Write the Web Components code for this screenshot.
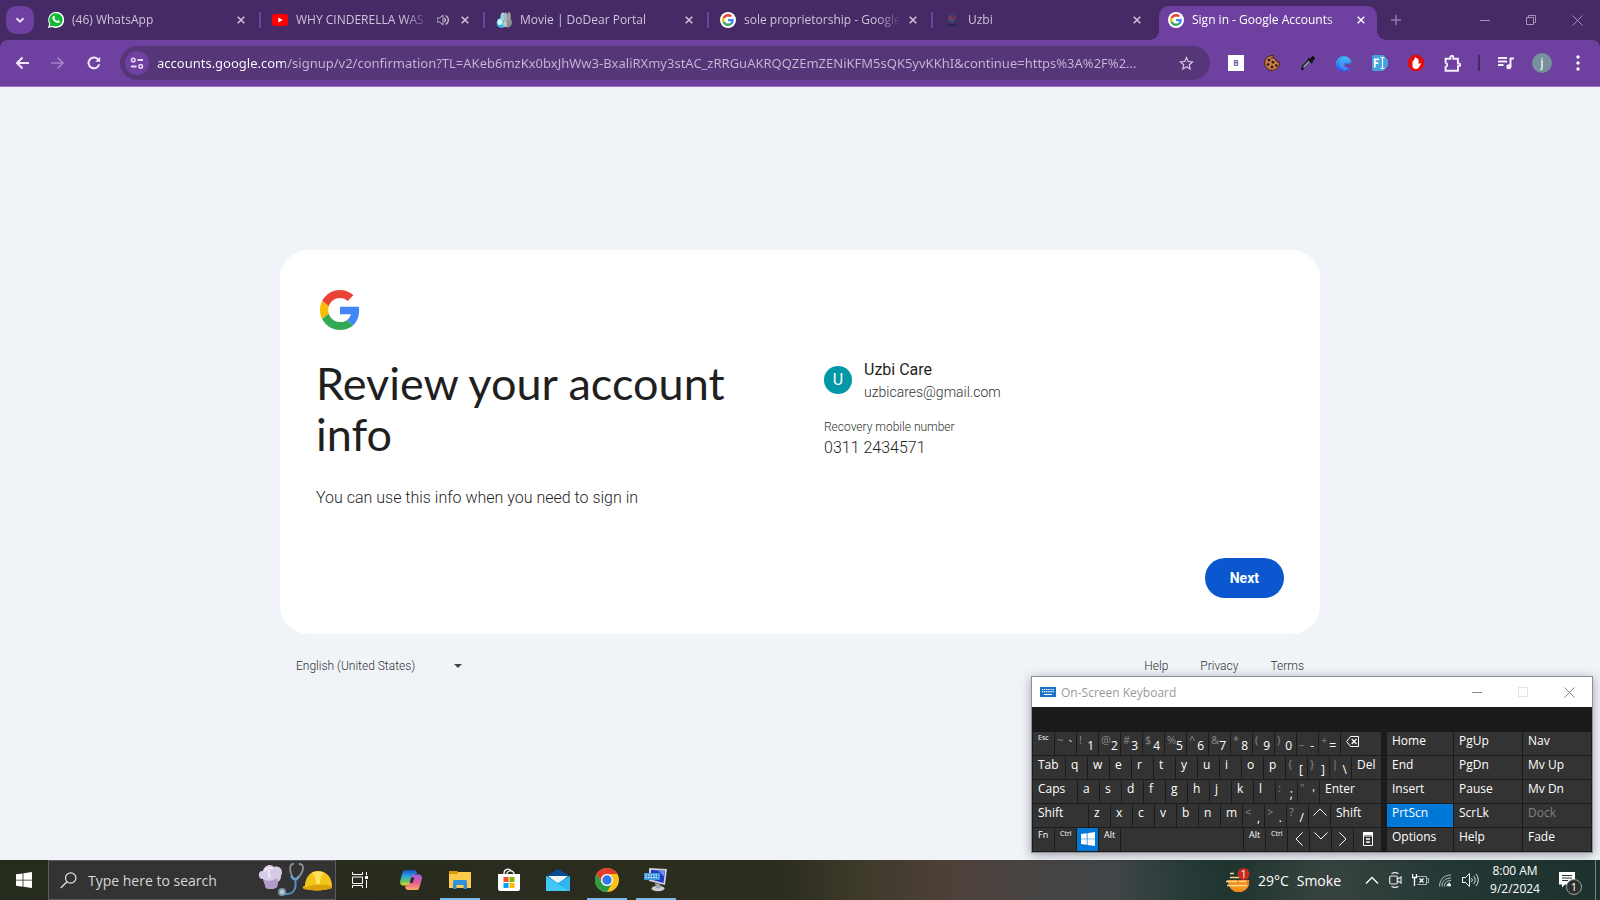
<!DOCTYPE html>
<html lang="en">
<head>
<meta charset="utf-8">
<title>Sign in - Google Accounts</title>
<style>
  html, body {
    margin: 0;
    height: 100%;
  }
  body {
    display: flex;
    flex-direction: column;
    min-height: 100vh;
    background-color: #f0f4f9;
    overflow: hidden;
    --ui-font: "Open Sans", "Noto Sans", sans-serif;
    --google-font: Roboto, "Liberation Sans", sans-serif;
    font-family: var(--ui-font);
  }
  account-page {
    flex: 1;
  }
  screen-keyboard {
    position: absolute;
    right: 7px;
    bottom: 47px;
  }
</style>
</head>
<body>
  <tab-strip>
    <browser-tab><ui-icon slot="icon" name="whatsapp"></ui-icon>(46) WhatsApp</browser-tab>
    <browser-tab sound><ui-icon slot="icon" name="youtube"></ui-icon>WHY CINDERELLA WAS A</browser-tab>
    <browser-tab><ui-icon slot="icon" name="movie"></ui-icon>Movie | DoDear Portal</browser-tab>
    <browser-tab><ui-icon slot="icon" name="gfav"></ui-icon>sole proprietorship - Google</browser-tab>
    <browser-tab class="last"><ui-icon slot="icon" name="uzbi"></ui-icon>Uzbi</browser-tab>
    <browser-tab active><ui-icon slot="icon" name="gfav"></ui-icon>Sign in - Google Accounts</browser-tab>
  </tab-strip>
  <tool-bar></tool-bar>
  <account-page>
    <account-card>
      <span slot="title">Review your account info</span>
      <span slot="subtitle">You can use this info when you need to sign in</span>
      <span slot="name">Uzbi Care</span>
      <span slot="email">uzbicares@gmail.com</span>
      <span slot="phone">0311 2434571</span>
    </account-card>
    <account-footer></account-footer>
  </account-page>
  <screen-keyboard></screen-keyboard>
  <task-bar></task-bar>

<script>
const G_PATHS = `
  <path fill="#EA4335" d="M24 9.5c3.54 0 6.71 1.22 9.21 3.6l6.85-6.85C35.9 2.38 30.47 0 24 0 14.62 0 6.51 5.38 2.56 13.22l7.98 6.19C12.43 13.72 17.74 9.5 24 9.5z"/>
  <path fill="#4285F4" d="M46.98 24.55c0-1.57-.15-3.09-.38-4.55H24v9.02h12.94c-.58 2.96-2.26 5.48-4.78 7.18l7.73 6c4.51-4.18 7.09-10.36 7.09-17.65z"/>
  <path fill="#FBBC05" d="M10.53 28.59c-.48-1.45-.76-2.99-.76-4.59s.27-3.14.76-4.59l-7.98-6.19C.92 16.46 0 20.12 0 24c0 3.88.92 7.54 2.56 10.78l7.97-6.19z"/>
  <path fill="#34A853" d="M24 48c6.48 0 11.93-2.13 15.89-5.81l-7.73-6c-2.15 1.45-4.92 2.3-8.16 2.3-6.26 0-11.57-4.22-13.47-9.91l-7.98 6.19C6.51 42.62 14.62 48 24 48z"/>`;
const WIN_PATHS = `<path fill="#fff" d="M0 2.3 6.6 1.4v6.3H0zM7.4 1.3 16 0v7.7H7.4zM0 8.4h6.6v6.3L0 13.8zM7.4 8.4H16V16l-8.6-1.2z"/>`;
const line = (d, w = 1, c = '#fff') => `<path d="${d}" fill="none" stroke="${c}" stroke-width="${w}"/>`;

// name: [width, height, viewBox, markup]
const ICONS = {
  google: [40, 40, '0 0 48 48', G_PATHS],
  gfav: [16, 16, '0 0 16 16', `<circle cx="8" cy="8" r="8" fill="#fff"/><svg x="2" y="2" width="12" height="12" viewBox="0 0 48 48">${G_PATHS}</svg>`],
  whatsapp: [16, 16, '0 0 16 16', `<path d="M0 16 1.2 11.8A8 8 0 1 1 4.3 14.9z" fill="#fff"/><path d="M1.6 14.5 2.4 11.7A6.7 6.7 0 1 1 4.6 13.7z" fill="#12b834"/><path d="M5.4 3.9c.4-.3.9-.2 1.1.2l.6 1.4-.7 1c.6 1.2 1.5 2 2.7 2.6l.9-1 1.6.8c.3.2.3.6.1 1-.4.9-1.3 1.3-2.2 1.2C6.8 10.7 4.6 8.4 4.3 6.1c-.1-.9.4-1.7 1.1-2.2z" fill="#fff"/>`],
  youtube: [16, 16, '0 0 16 16', '<rect y="2" width="16" height="12" rx="3" fill="#f00"/><path d="M6.3 5.500v5L10.7 8z" fill="#fff"/>'],
  movie: [16, 16, '0 0 16 16', '<ellipse cx="5.5" cy="11" rx="5" ry="5" fill="#38b7e6"/><ellipse cx="4" cy="10" rx="2.5" ry="3" fill="#d8f5fc"/><ellipse cx="7" cy="5" rx="2.5" ry="4.5" fill="#8fdcf2"/><ellipse cx="11.5" cy="10.5" rx="4.5" ry="5" fill="#8b8f92"/><ellipse cx="9.5" cy="5" rx="2" ry="4.5" fill="#aeb3b5"/><ellipse cx="13" cy="4.5" rx="1.7" ry="4.5" fill="#9da1a4"/><ellipse cx="9" cy="12" rx="2" ry="3" fill="#c3cacd"/>'],
  uzbi: [16, 16, '0 0 16 16', '<circle cx="8" cy="6" r="4.5" fill="#3d3a66"/><path d="M4 5l3-2 1 3 3-2 1 3-3 1-1 2-3-1z" fill="#7d3556"/><path d="M5 8l3-1 2 2-2 2z" fill="#28606f"/><path d="M3 12h10v2H3z" fill="#2e2450"/>'],
  down: [10, 10, '0 0 10 10', line('M1.5 3.2 5 6.7 8.5 3.2', 2, '#e8dcf5')],
  close: [8, 8, '0 0 8 8', line('M.7.7l6.6 6.6M7.3.7.7 7.3', 1.5, 'currentColor')],
  speaker: [12, 12, '0 0 12 12', '<path d="M0 4h2.500L6 1.2v9.6L2.5 8H0z" fill="none" stroke="#c5b9d3"/>' + line('M7.5 4a3 3 0 0 1 0 4M8.5 1.5a5 5 0 0 1 0 9', 1.3, '#c5b9d3')],
  plus: [10, 10, '0 0 10 10', line('M5 0v10M0 5h10', 1.5, '#8f7ca6')],
  min: [10, 10, '0 0 10 10', line('M0 5.5h10', 1, 'currentColor')],
  restore: [10, 10, '0 0 10 10', line('M.5 2.5h7v7h-7zM2.5 2.5v-2h7v7h-2', 1, 'currentColor')],
  max: [10, 10, '0 0 10 10', line('M.5.5h9v9h-9z', 1, 'currentColor')],
  x: [11, 11, '0 0 11 11', line('M.5.5l10 10M10.5.5l-10 10', 1, 'currentColor')],
  back: [14, 14, '0 0 14 14', line('M14 7H2M7.5 1.5 2 7l5.5 5.5', 2, '#f0e8f8')],
  forward: [14, 14, '0 0 14 14', line('M0 7h12M6.5 1.5 12 7l-5.5 5.5', 1.7, '#a283c6')],
  reload: [14, 14, '0 0 14 14', line('M12.2 8.3A5.4 5.4 0 1 1 11 3.3l1.5 1.6', 2, '#f0e8f8') + '<path d="M13.2.8v5H8.3z" fill="#f0e8f8"/>'],
  tune: [14, 12, '0 0 14 12', line('M7.5 3H13M1 9.5h5.5', 2, '#e6d9f4') + '<circle cx="3.3" cy="3" r="1.8" fill="none" stroke="#e6d9f4" stroke-width="1.5"/><circle cx="10.7" cy="9.3" r="1.8" fill="none" stroke="#e6d9f4" stroke-width="1.5"/>'],
  star: [15, 15, '0 0 24 24', '<path fill="#d3c6e2" d="M24 8.63l-8.63-.74L12 0 8.63 7.9 0 8.63l6.55 5.68L4.59 22.8 12 18.3l7.41 4.5-1.96-8.49L24 8.63zM12 15.9l-4.52 2.73 1.2-5.13-4-3.45 5.25-.45L12 4.8l2.07 4.8 5.25.45-4 3.45 1.2 5.13L12 15.9z"/>'],
  extb: [16, 16, '0 0 16 16', '<rect width="16" height="16" fill="#fff"/><text x="8" y="11" font-size="8" font-weight="700" font-family="Open Sans" text-anchor="middle" fill="#6a5fb0">B</text>'],
  cookie: [16, 16, '0 0 16 16', '<path d="M9 .5a3 3 0 0 0 2.5 3.500A3 3 0 0 0 15.5 7 7.5 7.5 0 1 1 9 .5z" fill="#c47a45" stroke="#4a2412"/><g fill="#2c140c"><circle cx="5" cy="5" r="1.3"/><circle cx="9" cy="7.3" r="1.3"/><circle cx="4" cy="9.5" r="1.3"/><circle cx="8" cy="12" r="1.3"/><circle cx="12.3" cy="10.5" r="1.3"/><circle cx="8" cy="3" r=".8"/></g>'],
  dropper: [16, 16, '0 0 16 16', line('M2 15 3 11.5 9.5 5', 2.4, '#161616') + line('M3.5 12 9.5 6', 1.2, '#7fc98a') + line('M8 3.500l4.5 4.5', 2, '#111') + line('M11 5.2 14 2', 3.6, '#111')],
  edge: [16, 16, '0 0 16 16', '<defs><linearGradient id="e" x1="0" x2="0" y1="0" y2="1"><stop offset="0" stop-color="#35b5ef"/><stop offset="1" stop-color="#2950ee"/></linearGradient></defs><path d="M15.7 7A8 8 0 1 0 14.8 13.2C11 14 8.5 12 9 8.5 10.5 9.5 13.5 9.3 15.7 7z" fill="url(#e)"/>' + line('M14 5.5C10 1 3 4.5 4.5 10.5c.7 2.5 2.5 4 5 4.5M13 7C9.5 4 6 7 7 10.5c.6 2 2.5 3 5 3', 0.6, '#8ad2f8')],
  fi: [16, 16, '0 0 16 16', '<path d="M0 2a2 2 0 0 1 2-2h9l5 5v6l-5 5H2a2 2 0 0 1-2-2z" fill="#45a3e0"/>' + line('M2.8 12.5V4.3h4.4M2.8 8.2h3.6', 1.8) + line('M8.5 2.5h4M8.5 13.5h4M10.5 2.5v11', 1.2)],
  hand: [16, 16, '0 0 16 16', '<path d="M4.7 0h6.6L16 4.7v6.6L11.3 16H4.7L0 11.3V4.7z" fill="#e40d0d"/><path d="M4.5 6v5c0 2 1.5 3 3.3 3 2 0 3-1.2 3.8-2.7l1.4-2.9-1-.5-1.4 1.5V4.5H9.5V3H8v-.7H6.9V4H5.8v2z" fill="#fff"/>'],
  puzzle: [17, 17, '0 0 16 16', line('M1.5 3.5h4.500V2.2a1.4 1.4 0 0 1 2.8 0v1.3h4.3V8h.8a1.3 1.3 0 0 1 0 2.6h-.8v4.2H1.5v-3.5a2.2 2.2 0 0 0 0-4.2z', 1.8, '#f4eefb')],
  music: [16, 14, '0 0 16 14', line('M0 2h9M0 5.5h9M0 9h5.5M12.5 11V2.5H16', 2, '#f4eefb') + '<circle cx="10.8" cy="10.8" r="2.5" fill="#f4eefb"/>'],
  dots: [4, 16, '0 0 4 16', '<circle cx="2" cy="2" r="1.7" fill="#fff"/><circle cx="2" cy="8" r="1.7" fill="#fff"/><circle cx="2" cy="14" r="1.7" fill="#fff"/>'],
  caret: [8, 4, '0 0 8 4', '<path d="M0 0h8L4 4z" fill="#444746"/>'],
  kbd: [16, 10, '0 0 16 10', '<rect width="16" height="10" fill="#1f74c9"/><path d="M2 2.5h12M2 4.7h12" stroke="#fff" stroke-width="1.2" stroke-dasharray="1.3 .8"/><path d="M4 7.5h8" stroke="#fff"/>'],
  win: [16, 16, '0 0 16 16', WIN_PATHS],
  winkey: [14, 14, '0 0 16 16', WIN_PATHS],
  bksp: [13, 11, '0 0 13 11', line('M.7 5.5 4.5.5h8v10h-8z', 1) + line('M5.7 3l4.8 5M10.5 3 5.7 8', 1.2)],
  up: [14, 8, '0 0 14 8', line('M.5 7.5 7 1l6.5 6.5', 1)],
  dn: [14, 8, '0 0 14 8', line('M.5.5 7 7 13.5.5', 1)],
  left: [8, 14, '0 0 8 14', line('M7.5.5 1 7l6.5 6.5', 1)],
  right: [8, 14, '0 0 8 14', line('M.5.5 7 7 .5 13.5', 1)],
  menu: [10, 14, '0 0 10 14', line('M.5 1.5h9M.5 4h9M.5 1v12.5h9V1', 1) + '<path d="M0 0h10v3H0z" fill="#fff"/>' + line('M3 7h4M3 10h4', 1.3)],
  search: [17, 17, '0 0 17 17', '<circle cx="10.7" cy="6" r="5.2" fill="none" stroke="#e6e6e6" stroke-width="1.2"/>' + line('M7 9.8.7 16', 1.3, '#e6e6e6')],
  gear: [76, 36, '0 0 76 36', `<g><path d="M6 17C1 18 0 8 6 9c1-6 8-8 11-4 6-2 10 4 7 9 0 4-2 5-3 6l-1 5c-4 3-9 2-11 1z" fill="#d8cbe8"/><path d="M6 17c5 3 10 2 14-1l1 4-1 5c-4 3-9 2-11 1z" fill="#b29bca"/><path d="M7 9c3-3 6-4 9-2M12 8c-1 4 0 6 1 8" fill="none" stroke="#f7f1fc" stroke-width="1.5"/></g>
    ${line('M37 2c-5-1-5 8-1 14 2 3 4 2 6-1 5-7 6-13 0-13', 1.8, '#8b9298')}${line('M38 17c2 9-1 15-8 15-2 0-5-1-5-3', 2, '#4b8fc4')}${line('M34 14c2 4 5 4 8 0', 2, '#5ba4d6')}<circle cx="25" cy="30" r="4" fill="#7d94a6"/><circle cx="25" cy="30" r="2.2" fill="#b8cad6"/>
    <path d="M48 24c0-7 4-15 13-15s14 7 14 15v2c-8 3-19 3-28 1-2-2-1-3 1-3z" fill="#f4c519"/><path d="M55 11c3-2 9-2 12 0-3 2-4 6-4 11h-4c0-5-1-9-4-11z" fill="#ffe060"/><path d="M46 26c10-4 18-4 29-2v2c-8 3-19 3-28 1z" fill="#d9a20d"/>`],
  taskview: [16, 16, '0 0 16 16', line('M.5 0v2.5h10V0M.5 16v-2.5h10V16M.5 5h10v6.5H.5zM14.5 0v3M14.5 8v8', 1) + '<path d="M13 4h3v3h-3z" fill="#fff"/>'],
  copilot: [22, 22, '0 0 22 22', `<defs><linearGradient id="a" x1="0" y1="0" x2="0" y2="1"><stop offset="0" stop-color="#1b4fc4"/><stop offset=".4" stop-color="#2aa5dd"/><stop offset=".75" stop-color="#6fc65b"/><stop offset="1" stop-color="#f3d332"/></linearGradient><linearGradient id="b" x1="0" y1="0" x2="0" y2="1"><stop offset="0" stop-color="#9b62e8"/><stop offset=".5" stop-color="#e65a9c"/><stop offset="1" stop-color="#ffa95e"/></linearGradient></defs>
    <path d="M5 1h9c2 0 2.5 1.5 3 4-3 0-4 1-4.8 4L11 14c-.6 2-1.5 2.5-3 2.5H3C.5 16.5-.3 14 .3 11.5l2-7C3 2 3.5 1 5 1z" fill="url(#a)"/><path d="M17 21H8c-2 0-2.5-1.5-3-4 3 0 4-1 4.8-4L11 8c.6-2 1.5-2.5 3-2.5h5c2.5 0 3.3 2.5 2.7 5l-2 7C19 20 18.5 21 17 21z" fill="url(#b)"/><path d="M11 8.5h3.5L12.5 14H10z" fill="#292b1e"/>`],
  folder: [22, 20, '0 0 22 20', '<path d="M0 1h8l2 2H0z" fill="#d58b00"/><path d="M0 2h22v16H0z" fill="#fccb4c"/><path d="M0 1h8l1.5 2L8 4H0z" fill="#e09b08"/><path d="M4 11.5a1.5 1.5 0 0 1 1.5-1.5h11a1.5 1.5 0 0 1 1.5 1.5V19h-3.5v-4h-7v4H4z" fill="#3390db"/>'],
  store: [24, 24, '0 0 24 24', line('M7 7V5a4 4 0 0 1 7-2.5M10 7V5a4 4 0 0 1 7 0v2', 1.3) + '<path d="M1 6h22v15a2 2 0 0 1-2 2H3a2 2 0 0 1-2-2z" fill="#fff"/><path d="M6.5 9h5v5h-5z" fill="#f25022"/><path d="M12.5 9h5v5h-5z" fill="#7fba00"/><path d="M6.5 15h5v5h-5z" fill="#00a4ef"/><path d="M12.5 15h5v5h-5z" fill="#ffb900"/>'],
  mail: [24, 24, '0 0 24 24', '<path d="M0 8 12 1l12 7v15H0z" fill="#0a4a93"/><path d="M2 8h20L12 16z" fill="#f3f3f3"/><path d="M0 8l12 7 12-7v15H0z" fill="#1f98e0"/><path d="M0 8l24 15H0z" fill="#42c8f5"/><path d="M24 8 12 15l12 8z" fill="#30b5ee"/>'],
  chrome: [24, 24, '0 0 24 24', '<circle cx="12" cy="12" r="12" fill="#fbc116"/><path d="M1.6 6A12 12 0 0 1 22.4 6H12a6 6 0 0 0-5.2 9z" fill="#e33b2e"/><path d="M1.6 6A12 12 0 0 0 12 24l5.2-9A6 6 0 0 1 6.8 15z" fill="#2a9b47"/><circle cx="12" cy="12" r="6" fill="#fff"/><circle cx="12" cy="12" r="4.7" fill="#2f78ea"/>'],
  osk: [24, 24, '0 0 24 24', '<ellipse cx="14" cy="20.5" rx="6.5" ry="2.8" fill="#c9ccd0"/><path d="M11 15l5 1 1 4h-5z" fill="#9fa4aa"/><path d="M5 0l18 1-2 16L5 13z" fill="#cdd1d8"/><path d="M7 2l14 .8L19.5 15 7 11.5z" fill="#2038c8"/><path d="M14 2.5l7 .3-.8 6z" fill="#6f8bf0"/><path d="M0 5h16v7H0z" fill="#3f97dd"/><path d="M1.5 7h13M1.5 9.5h13" stroke="#fff" stroke-dasharray="1.5 1"/>'],
  weather: [25, 24, '0 0 25 24', '<path d="M2 12h22a10.5 10.5 0 0 1-20 6z" fill="#f18a1c"/><path d="M4 17h20a10.5 9 0 0 1-3 4H8z" fill="#f39a22"/>' + line('M5 5.5h4M5 9.5h18M1 13.5h11M2 17.5h20M14 13.5h7', 1.6, '#f6d98c') + '<circle cx="18.5" cy="6" r="6" fill="#c42b1c"/><text x="18.5" y="9.5" font-size="10" font-family="Open Sans" text-anchor="middle" fill="#fff">1</text>'],
  camera: [13, 16, '0 0 13 16', '<rect x=".7" y="4" width="7.6" height="8" rx="1.5" fill="none" stroke="#eee" stroke-width="1.2"/>' + line('M8.5 7 12 5v6L8.5 9M2.5 1.5C5 .3 7 .3 9.5 1.5M2.5 14.5c2.5 1.2 4.5 1.2 7 0', 1.1, '#eee')],
  battery: [17, 12, '0 0 17 12', line('M5 2.5h9.5v8H5M15 4.5h1.5v4H15', 1, '#aab3b0') + line('M7.5 4.5l4 4M11.5 4.5l-4 4', 1.2) + line('M.5 0v3.5h4V0M2.5 4v8', 1.3)],
  wifi: [13, 13, '0 0 13 13', '<circle cx="10.5" cy="11" r="1.5" fill="#fff"/>' + line('M8 12.5c0-2 1-3.5 3-3.5', 1) + line('M5.5 12.5C5.5 8.5 8 6.5 12 6.5M3 12.5C3 7 6.5 4 12 4M.6 12.5C.6 5 5.5 1 12 1', 1, '#b8c2bf')],
  vol: [17, 14, '0 0 17 14', line('M.5 4.5h3l4-4v13l-4-4h-3z', 1) + line('M9.5 5a3 3 0 0 1 0 4M11.7 3a6 6 0 0 1 0 8M14 1a9 9 0 0 1 0 12', 1, '#dde3e1')],
  tray: [14, 8, '0 0 14 8', line('M1 7.5 7 1.5l6 6', 1.3)],
  note: [17, 16, '0 0 17 16', '<path d="M0 0h16v12.5H6L3 15.5v-3H0z" fill="#fff"/>' + line('M3 3.5h10M3 6h10M3 8.5h6', 1, '#23352f')]
};

class UiIcon extends HTMLElement {
  constructor() {
    super();
    this._root = this.attachShadow({ mode: 'open' });
  }

  connectedCallback() {
    const [w, h, box, body] = ICONS[this.getAttribute('name')];
    this._root.innerHTML = `<style>
      :host { display: inline-flex; flex: none; }
      svg { display: block; }
    </style>
    <svg width="${w}" height="${h}" viewBox="${box}" aria-hidden="true">${body}</svg>`;
  }
}
window.customElements.define('ui-icon', UiIcon);

class BrowserTab extends HTMLElement {
  constructor() {
    super();
    this._root = this.attachShadow({ mode: 'open' });
    this._root.innerHTML = `<style>
      :host {
        display: flex;
        flex: 0 1 auto;
        width: 224px;
        min-width: 0;
        height: 40px;
        color: #cfc4da;
        font-size: 12px;
      }
      .tab {
        flex: 1;
        display: flex;
        align-items: center;
        gap: 8px;
        min-width: 0;
        padding: 0 14px 0 11px;
        border-right: 2px solid #6e41a0;
        height: 16px;
        margin: 12px 0;
      }
      .title {
        flex: 1;
        overflow: hidden;
        white-space: nowrap;
        line-height: 16px;
        mask-image: linear-gradient(to right, #000 calc(100% - 24px), transparent);
      }
      button {
        display: flex;
        padding: 0;
        border: 0;
        background: none;
        color: inherit;
      }
      ui-icon[name=speaker] { margin-right: 4px; }
      :host([active]) { color: #fff; }
      :host([active]) .tab {
        position: relative;
        height: 28px;
        margin: 6px 4px 0 2px;
        padding: 0 12px 6px 9px;
        border: 0;
        border-radius: 10px 10px 0 0;
        background-color: #6e41a0;
      }
      :host([active]) .tab::before,
      :host([active]) .tab::after {
        content: "";
        position: absolute;
        bottom: 0;
        width: 10px;
        height: 10px;
      }
      :host([active]) .tab::before {
        right: 100%;
        background: radial-gradient(circle at 0 0, transparent 10px, #6e41a0 10px);
      }
      :host([active]) .tab::after {
        left: 100%;
        background: radial-gradient(circle at 100% 0, transparent 10px, #6e41a0 10px);
      }
      :host(.last) .tab { border-color: transparent; }
    </style>
    <div class="tab">
      <slot name="icon"></slot>
      <span class="title"><slot></slot></span>
      ${this.hasAttribute('sound') ? '<ui-icon name="speaker"></ui-icon>' : ''}
      <button aria-label="Close tab"><ui-icon name="close"></ui-icon></button>
    </div>`;
  }
}

class TabStrip extends HTMLElement {
  constructor() {
    super();
    this._root = this.attachShadow({ mode: 'open' });
    this._root.innerHTML = `<style>
      :host {
        display: flex;
        height: 40px;
        background-color: #452a65;
      }
      button {
        display: flex;
        align-items: center;
        justify-content: center;
        padding: 0;
        border: 0;
        background: none;
        color: #a292b6;
      }
      .list {
        flex: none;
        width: 28px;
        height: 28px;
        margin: 6px 3px 6px 6px;
        border-radius: 10px;
        background-color: #6e41a0;
      }
      .tabs { display: flex; min-width: 0; }
      .new { width: 30px; }
      .win { display: flex; margin-left: auto; }
      .win button { width: 46px; }
    </style>
    <button class="list" aria-label="Search tabs"><ui-icon name="down"></ui-icon></button>
    <div class="tabs"><slot></slot></div>
    <button class="new" aria-label="New tab"><ui-icon name="plus"></ui-icon></button>
    <div class="win">
      <button aria-label="Minimize"><ui-icon name="min"></ui-icon></button>
      <button aria-label="Restore"><ui-icon name="restore"></ui-icon></button>
      <button aria-label="Close"><ui-icon name="x"></ui-icon></button>
    </div>`;
  }
}
window.customElements.define('tab-strip', TabStrip);
window.customElements.define('browser-tab', BrowserTab);

class ToolBar extends HTMLElement {
  constructor() {
    super();
    this._root = this.attachShadow({ mode: 'open' });
    const btn = (icon, label) => `<button aria-label="${label}"><ui-icon name="${icon}"></ui-icon></button>`;
    this._root.innerHTML = `<style>
      :host {
        display: block;
        background-color: #452a65;
      }
      .bar {
        display: flex;
        align-items: center;
        padding: 6px 4px;
        border-bottom: 1px solid #9876bd;
        border-radius: 8px 8px 0 0;
        background-color: #6e41a0;
      }
      button {
        display: flex;
        align-items: center;
        justify-content: center;
        width: 36px;
        height: 34px;
        padding: 0;
        border: 0;
        background: none;
      }
      .address {
        flex: 1;
        display: flex;
        align-items: center;
        min-width: 0;
        height: 34px;
        margin: 0 8px;
        padding-left: 5px;
        border-radius: 17px;
        background-color: #563679;
      }
      .address .site {
        width: 24px;
        height: 24px;
        border-radius: 50%;
        background-color: #6e41a0;
      }
      .address button:last-child { width: 48px; }
      input {
        flex: 1;
        min-width: 0;
        margin-left: 8px;
        padding: 0;
        border: 0;
        outline: 0;
        font: 13px/20px "Noto Sans", var(--ui-font);
        text-overflow: ellipsis;
        color: #c6b8d6;
        /* host name in white, the rest of the url dimmed */
        background: linear-gradient(to right, #fff 128px, #c6b8d6 128px);
        background-clip: text;
        -webkit-text-fill-color: transparent;
      }
      i {
        width: 2px;
        height: 16px;
        margin: 0 8px;
        background-color: #452a65;
      }
      .me {
        width: 20px;
        height: 20px;
        margin: 0 8px;
        border-radius: 50%;
        background-color: #78909c;
        color: #fff;
        font: 12px var(--google-font);
      }
    </style>
    <div class="bar">
      ${btn('back', 'Back')}${btn('forward', 'Forward')}${btn('reload', 'Reload')}
      <div class="address">
        <button class="site" aria-label="View site information"><ui-icon name="tune"></ui-icon></button>
        <input aria-label="Address" value="accounts.google.com/signup/v2/confirmation?TL=AKeb6mzKx0bxJhWw3-BxaliRXmy3stAC_zRRGuAKRQQZEmZENiKFM5sQK5yvKKhI&amp;continue=https%3A%2F%2...">
        ${btn('star', 'Bookmark')}
      </div>
      ${btn('extb', 'Extension B')}${btn('cookie', 'Cookies')}${btn('dropper', 'Colour picker')}${btn('edge', 'Edge')}
      ${btn('fi', 'Fonts')}${btn('hand', 'Blocker')}${btn('puzzle', 'Extensions')}
      <i></i>
      ${btn('music', 'Media')}
      <button class="me" aria-label="Profile">j</button>
      ${btn('dots', 'Menu')}
    </div>`;
  }
}
window.customElements.define('tool-bar', ToolBar);

class AccountPage extends HTMLElement {
  constructor() {
    super();
    this._root = this.attachShadow({ mode: 'open' });
    this._root.innerHTML = `<style>
      :host {
        display: flex;
        flex-direction: column;
        align-items: center;
        justify-content: center;
        font-family: var(--google-font);
      }
      .content {
        width: 90%;
        max-width: 1040px;
      }
    </style>
    <div class="content"><slot></slot></div>`;
  }
}
window.customElements.define('account-page', AccountPage);

class AccountCard extends HTMLElement {
  constructor() {
    super();
    this._root = this.attachShadow({ mode: 'open' });
    this._root.innerHTML = `<style>
      :host {
        display: block;
        padding: 36px;
        border-radius: 28px;
        background-color: #fff;
        color: #1f1f1f;
      }
      .logo { padding: 4px; }
      .cols {
        display: grid;
        grid-template-columns: 1fr 1fr;
        gap: 48px;
        margin-top: 24px;
      }
      h1 {
        margin: 0;
        font: 400 45px/51px Lato, var(--google-font);
      }
      p { margin: 0; }
      .sub {
        margin-top: 26px;
        font-size: 16px;
        font-weight: 300;
        line-height: 24px;
      }
      .user {
        display: flex;
        align-items: center;
        gap: 12px;
      }
      .avatar {
        width: 28px;
        height: 28px;
        border-radius: 50%;
        background-color: #0097a7;
        color: #fff;
        font-size: 16px;
        line-height: 28px;
        text-align: center;
      }
      .big {
        font-size: 16px;
        line-height: 24px;
      }
      .phone { font-weight: 300; }
      .email {
        font-size: 14px;
        font-weight: 300;
        line-height: 20px;
        color: #303231;
      }
      .label {
        margin-top: 16px;
        font-size: 12px;
        font-weight: 300;
        line-height: 18px;
        color: #303231;
      }
      .actions {
        display: flex;
        justify-content: flex-end;
        margin-top: 48px;
      }
      button {
        height: 40px;
        padding: 0 25px;
        border: 0;
        border-radius: 20px;
        background-color: #0b57d0;
        color: #fff;
        font: 700 14px var(--google-font);
      }
    </style>
    <ui-icon class="logo" name="google"></ui-icon>
    <div class="cols">
      <div>
        <h1><slot name="title"></slot></h1>
        <p class="sub"><slot name="subtitle"></slot></p>
      </div>
      <div>
        <div class="user">
          <div class="avatar">U</div>
          <div>
            <p class="big"><slot name="name"></slot></p>
            <p class="email"><slot name="email"></slot></p>
          </div>
        </div>
        <p class="label">Recovery mobile number</p>
        <p class="big phone"><slot name="phone"></slot></p>
      </div>
    </div>
    <div class="actions"><button>Next</button></div>`;
  }
}
window.customElements.define('account-card', AccountCard);

class AccountFooter extends HTMLElement {
  constructor() {
    super();
    this._root = this.attachShadow({ mode: 'open' });
    this._root.innerHTML = `<style>
      :host {
        display: flex;
        align-items: center;
        padding: 24px 16px;
        color: #303231;
        font-size: 12px;
        font-weight: 300;
        line-height: 16px;
      }
      label {
        display: flex;
        align-items: center;
      }
      select {
        appearance: none;
        width: 158px;
        padding: 0;
        border: 0;
        background: none;
        color: inherit;
        font: inherit;
      }
      nav {
        display: flex;
        gap: 32px;
        margin-left: auto;
      }
      a {
        color: inherit;
        text-decoration: none;
      }
    </style>
    <label><select aria-label="Language"><option>English (United States)</option></select><ui-icon name="caret"></ui-icon></label>
    <nav><a href="#help">Help</a><a href="#privacy">Privacy</a><a href="#terms">Terms</a></nav>`;
  }
}
window.customElements.define('account-footer', AccountFooter);

// attributes: shift = grey upper symbol, icon = glyph instead of text
class OskKey extends HTMLElement {
  constructor() {
    super();
    this._root = this.attachShadow({ mode: 'open' });
    const shift = this.getAttribute('shift');
    const icon = this.getAttribute('icon');
    this._root.innerHTML = `<style>
      :host { display: flex; min-width: 0; }
      button {
        flex: 1;
        display: flex;
        justify-content: space-between;
        align-items: flex-start;
        min-width: 0;
        height: 23px;
        padding: 0 5px;
        border: 0;
        background-color: #333;
        color: #fff;
        font: 12px/18px var(--ui-font);
        white-space: nowrap;
      }
      :host([shift]) button { padding: 0 4px 0 2px; }
      .shift {
        color: #8a8a8a;
        font-size: 11px;
        line-height: 16px;
      }
      .low { padding-top: 5px; }
      :host([tiny]) button { font-size: 7px; line-height: 12px; }
      :host([small]) button { font-size: 9px; line-height: 14px; }
      :host([on]) button { background-color: #0078d7; }
      :host([off]) button { color: #808080; }
      :host([icon]) button { justify-content: center; padding-top: 4px; }
      :host([icon=bksp]) button { justify-content: flex-start; }
    </style>
    <button>${shift ? '<span class="shift"></span><span class="low"><slot></slot></span>'
      : icon ? `<ui-icon name="${icon}"></ui-icon>` : '<slot></slot>'}</button>`;
    if (shift) this._root.querySelector('.shift').textContent = shift;
    if (icon) this._root.querySelector('button').setAttribute('aria-label', icon);
  }
}

// key: [label, width, options]
const letters = s => [...s].map(c => [c, 21]);
const pairs = s => s.split(' ').map(p => [p[1], 21, { shift: p[0] }]);
const MAIN_KEYS = [
  [['Esc', 21, { tiny: '' }], ...pairs('~` !1 @2 #3 $4 %5 ^6 &7 *8 (9 )0 _- +='), ['', 40, { icon: 'bksp' }]],
  [['Tab', 32], ...letters('qwertyuiop'), ...pairs('{[ }] |\\'), ['Del', 29]],
  [['Caps', 44], ...letters('asdfghjkl'), ...pairs(':; "\''), ['Enter', 61]],
  [['Shift', 55], ...letters('zxcvbnm'), ...pairs('<, >. ?/'), ['', 21, { icon: 'up' }], ['Shift', 50]],
  [['Fn', 21, { small: '' }], ['Ctrl', 21, { tiny: '' }], ['', 21, { icon: 'winkey', on: '' }], ['Alt', 21, { small: '' }],
    ['', 122], ['Alt', 21, { small: '' }], ['Ctrl', 21, { tiny: '' }], ['', 21, { icon: 'left' }], ['', 21, { icon: 'dn' }],
    ['', 21, { icon: 'right' }], ['', 27, { icon: 'menu' }]]
];
const SIDE_KEYS = [
  ['Home', 'PgUp', 'Nav'],
  ['End', 'PgDn', 'Mv Up'],
  ['Insert', 'Pause', 'Mv Dn'],
  ['PrtScn', 'ScrLk', 'Dock'],
  ['Options', 'Help', 'Fade']
].map(r => r.map((t, i) => [t, [66, 68, 68][i], t === 'PrtScn' ? { on: '' } : t === 'Dock' ? { off: '' } : {}]));

class ScreenKeyboard extends HTMLElement {
  constructor() {
    super();
    this._root = this.attachShadow({ mode: 'open' });
    this._root.innerHTML = `<style>
      :host {
        display: block;
        width: 560px;
        border: 1px solid #8f9194;
        background-color: #1b1b1b;
        box-shadow: 0 2px 10px rgba(0, 0, 0, .35);
      }
      header {
        display: flex;
        align-items: center;
        height: 30px;
        padding-left: 8px;
        background-color: #fff;
        color: #999;
        font-size: 12px;
      }
      header span { margin-left: 5px; }
      header div { display: flex; margin-left: auto; }
      header button {
        display: flex;
        align-items: center;
        justify-content: center;
        width: 46px;
        height: 30px;
        padding: 0;
        border: 0;
        background: none;
        color: #888;
      }
      header button:disabled { color: #e3e3e3; }
      .keys {
        display: flex;
        gap: 6px;
        padding: 25px 1px 1px;
      }
      .main { flex: 348; }
      .side { flex: 204; }
      .block {
        display: flex;
        flex-direction: column;
        gap: 1px;
        min-width: 0;
      }
      .row { display: flex; gap: 1px; }
    </style>
    <header>
      <ui-icon name="kbd"></ui-icon><span>On-Screen Keyboard</span>
      <div>
        <button aria-label="Minimize"><ui-icon name="min"></ui-icon></button>
        <button aria-label="Maximize" disabled><ui-icon name="max"></ui-icon></button>
        <button aria-label="Close"><ui-icon name="x"></ui-icon></button>
      </div>
    </header>
    <div class="keys">
      <div class="block main"></div>
      <div class="block side"></div>
    </div>`;
    this.fill('.main', MAIN_KEYS);
    this.fill('.side', SIDE_KEYS);
  }

  fill(where, rows) {
    const esc = s => s.replace(/&/g, '&amp;').replace(/"/g, '&quot;').replace(/</g, '&lt;');
    this._root.querySelector(where).innerHTML = rows.map(row => `<div class="row">${row.map(([label, w, opts = {}]) => {
      const attrs = Object.keys(opts).map(k => `${k}="${esc(opts[k])}"`).join(' ');
      return `<osk-key style="flex: ${w} 1 0" ${attrs}>${esc(label)}</osk-key>`;
    }).join('')}</div>`).join('');
  }
}
window.customElements.define('screen-keyboard', ScreenKeyboard);
window.customElements.define('osk-key', OskKey);

class TaskBar extends HTMLElement {
  constructor() {
    super();
    this._root = this.attachShadow({ mode: 'open' });
    const app = (icon, label, open) => `<button class="app ${open ? 'open' : ''}" aria-label="${label}"><ui-icon name="${icon}"></ui-icon></button>`;
    this._root.innerHTML = `<style>
      :host {
        display: flex;
        height: 40px;
        color: #fff;
        background: linear-gradient(to right, #252b1d 0, #292c1e 30%, #2c2e1f 49%, #3f3a2c 54%, #4e4038 59%, #474544 65%, #404547 70%, #263b38 74%, #20352f 77%, #384340 83%, #243936 90%, #1d312f 100%);
      }
      button {
        display: flex;
        align-items: center;
        justify-content: center;
        padding: 0;
        border: 0;
        background: none;
        color: inherit;
        font: inherit;
      }
      .start { width: 48px; }
      .search {
        display: flex;
        align-items: center;
        box-sizing: border-box;
        flex: 0 1 288px;
        min-width: 0;
        padding: 0 2px 0 11px;
        border: 1px solid #5c5c5c;
        background-color: #333;
      }
      input {
        flex: 1;
        min-width: 0;
        padding: 0 0 0 11px;
        border: 0;
        outline: 0;
        background: none;
        color: #d6d6d6;
        font: 14px var(--ui-font);
      }
      input::placeholder { color: #d6d6d6; }
      .app {
        width: 40px;
        margin: 0 9px 0 0;
        border-bottom: 2px solid transparent;
        border-top: 2px solid transparent;
      }
      .app:first-child { width: 44px; }
      .apps { display: flex; padding-left: 2px; }
      .open { border-bottom-color: #76b9ed; }
      .tray {
        display: flex;
        align-items: center;
        margin-left: auto;
        gap: 10px;
      }
      .weather { gap: 8px; font-size: 14px; margin-right: 14px; }
      .clock {
        flex-direction: column;
        width: 52px;
        font-size: 12px;
        line-height: 18px;
      }
      .note { position: relative; margin: 0 9px 0 8px; }
      .count {
        position: absolute;
        left: 7px;
        top: 7px;
        width: 14px;
        height: 14px;
        border: 1px solid #9aa3a0;
        border-radius: 50%;
        background-color: #2b2f2e;
        font-size: 11px;
        line-height: 14px;
      }
      hr {
        align-self: stretch;
        width: 1px;
        margin: 0 4px 0 0;
        border: 0;
        background-color: #7b8785;
      }
    </style>
    <button class="start" aria-label="Start"><ui-icon name="win"></ui-icon></button>
    <div class="search">
      <ui-icon name="search"></ui-icon>
      <input placeholder="Type here to search" aria-label="Search">
      <ui-icon name="gear"></ui-icon>
    </div>
    <div class="apps">
      ${app('taskview', 'Task View')}${app('copilot', 'Copilot')}${app('folder', 'File Explorer', true)}${app('store', 'Store')}
      ${app('mail', 'Mail')}${app('chrome', 'Chrome', true)}${app('osk', 'On-Screen Keyboard', true)}
    </div>
    <div class="tray">
      <button class="weather"><ui-icon name="weather"></ui-icon><span>29°C</span><span>Smoke</span></button>
      <button aria-label="Show hidden icons"><ui-icon name="tray"></ui-icon></button>
      <button aria-label="Camera"><ui-icon name="camera"></ui-icon></button>
      <button aria-label="Battery"><ui-icon name="battery"></ui-icon></button>
      <button aria-label="Network"><ui-icon name="wifi"></ui-icon></button>
      <button aria-label="Volume"><ui-icon name="vol"></ui-icon></button>
      <button class="clock"><span>8:00 AM</span><span>9/2/2024</span></button>
      <button class="note" aria-label="Notifications"><ui-icon name="note"></ui-icon><span class="count">1</span></button>
      <hr>
    </div>`;
  }
}
window.customElements.define('task-bar', TaskBar);
</script>
</body>
</html>
